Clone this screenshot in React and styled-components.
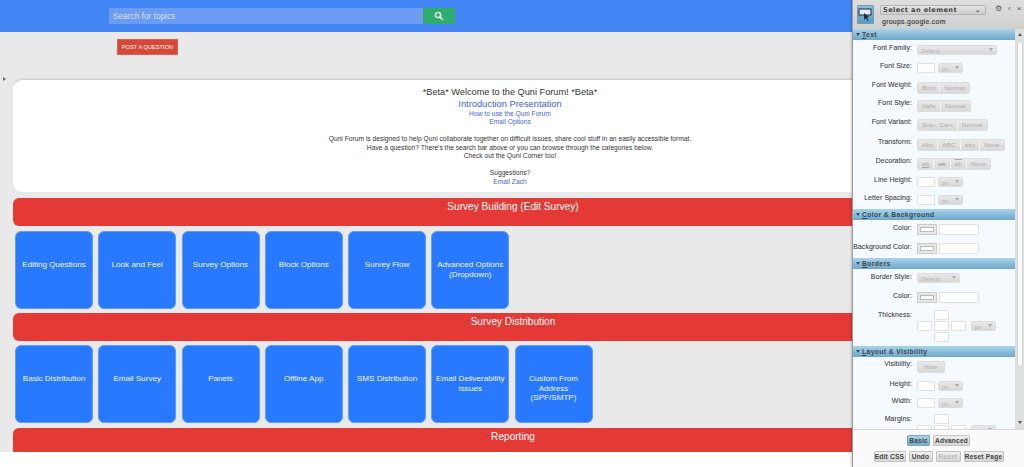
import React from 'react';
import styled, { createGlobalStyle } from 'styled-components';

const Global = createGlobalStyle`
  html, body { margin: 0; padding: 0; background: #fff; overflow: hidden; }
  body { font-family: "Liberation Sans", Arial, sans-serif; }
`;
const Page = styled.div`position: relative; width: 1024px; height: 467px; overflow: hidden; background: #fff;`;
const Main = styled.div`height: 452px; overflow: hidden; background: #e9e9ea;`;
const TopBar = styled.header`
  height: 32px; background: #4285f4; display: flex; align-items: center; padding-left: 109px; box-sizing: border-box;
`;
const SearchBox = styled.div`
  width: 314px; height: 16px; background: #6d9cf6; color: #d5e2fb; font-size: 8.3px; display: flex; align-items: center;
  justify-content: space-between; padding: 0 4px; box-sizing: border-box;
`;
const SearchCaret = styled.span`width: 0; height: 0; border: 2px solid transparent; border-top: 3px solid #8e9bb4; margin-top: 3px;`;
const SearchBtn = styled.div`width: 32px; height: 16px; background: #2fad6d; display: flex; align-items: center; justify-content: center;`;
const ActionRow = styled.div`height: 48px; padding: 7px 0 0 117px; box-sizing: border-box; position: relative;`;
const PostBtn = styled.div`
  width: 61px; height: 16px; background: #d64937; border: 1px solid #e0604f; box-sizing: border-box; color: #fff;
  font-size: 5.7px; display: flex; align-items: center; justify-content: center; white-space: nowrap;
`;
const Toggle = styled.span`
  position: absolute; left: 3px; top: 45px; width: 0; height: 0; border: 2px solid transparent; border-left: 3px solid #666;
`;
const Content = styled.div`width: 994px; margin-left: 13px;`;
const Welcome = styled.section`
  height: 112px; background: #fff; border-radius: 9px; box-shadow: 0 -2px 2px -1px rgba(0,0,0,.15); text-align: center;
  padding-top: 6.5px; box-sizing: border-box; color: #333; font-size: 6.7px; line-height: 8.5px; margin-bottom: 6px;
`;
const Title = styled.div`font-size: 9.2px; line-height: 11px;`;
const BigLink = styled.div`font-size: 9.3px; line-height: 12px; color: #3d5fd0;`;
const Small = styled.div`color: ${p => (p.$link ? '#4a5fd0' : '#333')}; min-height: 8.5px; padding-top: ${p => p.$top || 0}px;`;
const CatBar = styled.div`
  height: 28px; background: #e53935; border-radius: 6px; color: #fff; font-size: 10.1px; line-height: 13px;
  text-align: center; box-sizing: border-box; padding-top: 2px;
`;
const CatCaret = styled.span`
  display: inline-block; width: 0; height: 0; border: 2px solid transparent; border-top: 2px solid #8b4a48; margin-right: 2px; vertical-align: 1px;
`;
const Tiles = styled.div`display: flex; gap: 5.25px; padding: ${p => p.$top}px 0 ${p => p.$bottom}px 2px;`;
const Tile = styled.div`
  width: 78px; height: 78px; background: #2979ff; border: 1px solid #5f9bff; border-radius: 6px; box-sizing: border-box; color: #f1f6ff;
  font-size: 8.1px; line-height: 9.7px; text-align: center; padding: 28px 2px 0;
`;

const Panel = styled.aside`
  position: absolute; right: 0; top: 0; width: 172px; height: 467px; background: #f4faff; border-left: 1px solid #9a9a9a; box-sizing: border-box;
  display: flex; flex-direction: column; font-size: 7px; color: #444;
  box-shadow: -1px 0 2px rgba(0,0,0,.2);
`;
const PanelHead = styled.div`
  height: 29px; flex: none; background: linear-gradient(#dedede,#cfcfcf); display: flex; padding: 5px 4px 0 4px; box-sizing: border-box; gap: 6px;
`;
const Logo = styled.div`
  width: 19px; height: 19px; background: linear-gradient(#8cc0dc,#5c9bc0); border: 1px solid #6f9db8; box-sizing: border-box; border-radius: 1px;
  display: flex; align-items: center; justify-content: center;
`;
const HeadCol = styled.div`display: flex; flex-direction: column; gap: 3px;`;
const ElSelect = styled.div`
  width: 106px; height: 10px; background: linear-gradient(#e6e6e6,#cbcbcb); border: 1px solid #b4b4b4; border-radius: 2px; box-sizing: border-box;
  font-family: "DejaVu Sans", sans-serif; font-weight: 700; font-size: 6.6px; line-height: 8px; padding: 0 4px 0 2px; letter-spacing: .4px; color: #444; display: flex; justify-content: space-between;
`;
const Host = styled.div`font-size: 6.9px; padding-left: 2px; letter-spacing: .3px; color: #3a3a3a; -webkit-text-stroke: .15px #3a3a3a;`;
const HeadIcons = styled.div`display: flex; gap: 6px; align-items: flex-start; color: #555; margin-left: 3px; font-size: 8px; line-height: 8px; height: 10px; padding-top: 0;`;
const Scroll = styled.div`flex: 1; display: flex; overflow: hidden; min-height: 0;`;
const Sections = styled.div`width: 162px; flex: none; overflow: hidden; height: 400px;`;
const Track = styled.div`flex: 1; background: #dfdfdf; position: relative; border-left: 1px solid #ddd;`;
const Thumb = styled.div`position: absolute; left: 1px; right: 1px; top: 12px; height: 326px; background: #fbfbfb; border: 1px solid #d5d5d5; border-radius: 3px; box-sizing: border-box;`;
const ArrowUp = styled.span`position: absolute; left: 2px; top: 2px; width: 0; height: 0; border: 2px solid transparent; border-bottom: 3px solid #555;`;
const ArrowDown = styled.span`position: absolute; left: 2px; top: 392px; width: 0; height: 0; border: 2px solid transparent; border-top: 3px solid #555;`;
const SectionHead = styled.div`
  height: ${p => p.$h || 11}px; background: linear-gradient(#a9d4ec,#6ea6c8); font-size: 6.8px; font-weight: 700; line-height: 11px; color: #3a4a56; padding-left: 3px; letter-spacing: .35px;
`;
const Hot = styled.span`text-decoration: underline;`;
const Tri = styled.span`display: inline-block; width: 0; height: 0; border: 2px solid transparent; border-top: 3px solid #33505f; margin-right: 2px; vertical-align: -1px;`;
const Row = styled.div`display: flex; height: ${p => p.$h}px; align-items: flex-start;`;
const Label = styled.div`
  width: 59px; flex: none; text-align: right; font-size: 6.9px; line-height: ${p => p.$lh || 7}px; color: #444; padding-top: ${p => p.$pt ?? 4}px; letter-spacing: .1px; -webkit-text-stroke: .1px #444;
`;
const Controls = styled.div`margin-left: 5px; display: flex; gap: ${p => p.$gap ?? 3}px; padding-top: ${p => p.$pt ?? 5}px;`;
const Input = styled.div`
  width: ${p => p.$w || 18}px; height: ${p => p.$tall ? 11 : 10}px; background: #fff; border: 1px solid #e0e0e0; box-sizing: border-box; border-radius: 1px;
`;
const Drop = styled.div`
  width: ${p => p.$w || 25}px; height: 10px; background: linear-gradient(#e8e8e8,#d8d8d8); border: 1px solid #ddd; box-sizing: border-box; border-radius: 2px;
  color: #b5b5b5; font-size: 6px; line-height: 11px; padding-left: 3px; display: flex; justify-content: space-between; overflow: hidden;
`;
const DropTri = styled.span`width: 0; height: 0; border: 2.5px solid transparent; border-top: 3px solid #a8a8a8; margin: 2px 3px 0 0;`;
const Seg = styled.div`display: flex; height: 10px; background: linear-gradient(#e8e8e8,#d9d9d9); border: 1px solid #ddd; border-radius: 2px;`;
const SegItem = styled.div`
  padding: 0 ${p => p.$pad}px; font-size: 6.2px; line-height: 10px; color: #aaa; letter-spacing: .2px; text-decoration: ${p => p.$deco || 'none'};
  font-style: ${p => (p.$italic ? 'italic' : 'normal')}; font-variant: ${p => (p.$caps ? 'small-caps' : 'normal')};
  border-left: ${p => (p.$first ? 'none' : '1px solid #f4f4f4')};
`;
const Swatch = styled.div`
  width: 20px; height: 11px; background: #e6e6e6; border: 1px solid #ccc; box-sizing: border-box; padding: 2px; display: flex;
`;
const SwatchFill = styled.div`flex: 1; background: #fff; border: 1px solid #bbb;`;
const Quad = styled.div`
  display: grid; grid-template-columns: 15px 15px 15px 25px; grid-template-rows: 10px 10px 10px; gap: 1px 2px; margin-left: 5px; padding-top: 3px;
`;
const QuadCell = styled.div`
  grid-column: ${p => p.$c}; grid-row: ${p => p.$r}; background: #fff; border: 1px solid #e0e0e0; box-sizing: border-box; border-radius: 1px;
`;
const QuadDrop = styled(Drop)`grid-column: 4; grid-row: 2; margin-left: 3px;`;
const Footer = styled.div`
  flex: none; height: 38px; background: #fafafa; border-top: 1px solid #d8d8d8; box-sizing: border-box; padding-top: 5px; display: flex; flex-direction: column; align-items: center; gap: 5px;
`;
const FootRow = styled.div`display: flex; gap: 3px; justify-content: center;`;
const FootBtn = styled.div`
  width: ${p => p.$w}px; height: 11px; border: 1px solid ${p => (p.$active ? '#7aa8c4' : '#c4c4c4')}; border-radius: 1px; box-sizing: border-box; text-align: center;
  background: ${p => (p.$active ? 'linear-gradient(#a9d4ec,#78aecd)' : 'linear-gradient(#f0f0f0,#d6d6d6)')};
  color: ${p => (p.$dim ? '#bbb' : '#444')}; font-size: 6.6px; font-weight: 700; line-height: 9px; letter-spacing: .2px; white-space: nowrap;
`;

const Unit = () => <Drop>px<DropTri /></Drop>;
const FieldRow = ({ h, label }) => (
  <Row $h={h}><Label>{label}</Label><Controls><Input /><Unit /></Controls></Row>
);
const SegRow = ({ h, label, items, pad = 4, decos, italicFirst, capsFirst, ctrl }) => (
  <Row $h={h}>
    <Label $pt={ctrl === 4 ? 3 : 4}>{label}</Label>
    <Controls $pt={ctrl}>
      <Seg>{items.map((t, i) => (
        <SegItem key={t + i} $first={i === 0} $pad={pad} $deco={decos && decos[i]} $italic={italicFirst && i === 0} $caps={capsFirst && i === 0}>{t}</SegItem>
      ))}</Seg>
    </Controls>
  </Row>
);
const ColorRow = ({ label, twoLine }) => (
  <Row $h={19}>
    <Label $lh={twoLine ? 5.5 : 7} $pt={twoLine ? 4.5 : 4}>{label}</Label>
    <Controls $pt={4} $gap={2}><Swatch><SwatchFill /></Swatch><Input $w={40} $tall /></Controls>
  </Row>
);
const Section = ({ hot, rest, h }) => <SectionHead $h={h}><Tri /><Hot>{hot}</Hot>{rest}</SectionHead>;

const first = ['Editing Questions', 'Look and Feel', 'Survey Options', 'Block Options', 'Survey Flow', 'Advanced Options (Dropdown)'];
const second = ['Basic Distribution', 'Email Survey', 'Panels', 'Offline App', 'SMS Distribution', 'Email Deliverability Issues', 'Custom From Address (SPF/SMTP)'];

export default function App() {
  return (
    <Page>
      <Global />
      <Main>
        <TopBar>
          <SearchBox>Search for topics<SearchCaret /></SearchBox>
          <SearchBtn>
            <svg width="10" height="10" viewBox="0 0 10 10" fill="none" stroke="#fff" strokeWidth="1.4"><circle cx="4" cy="4" r="2.6" /><path d="M6 6l3 3" /></svg>
          </SearchBtn>
        </TopBar>
        <ActionRow><PostBtn>POST A QUESTION</PostBtn><Toggle /></ActionRow>
        <Content>
          <Welcome>
            <Title>*Beta* Welcome to the Quni Forum! *Beta*</Title>
            <BigLink>Introduction Presentation</BigLink>
            <Small $link>How to use the Quni Forum</Small>
            <Small $link>Email Options</Small>
            <Small $top={8.5}>Quni Forum is designed to help Quni collaborate together on difficult issues, share cool stuff in an easily accessible format.</Small>
            <Small>Have a question? There's the search bar above or you can browse through the categories below.</Small>
            <Small>Check out the Quni Corner too!</Small>
            <Small $top={8.5}>Suggestions?</Small>
            <Small $link>Email Zach</Small>
          </Welcome>
          <CatBar><CatCaret />Survey Building (Edit Survey)</CatBar>
          <Tiles $top={5} $bottom={4}>{first.map(t => <Tile key={t}>{t}</Tile>)}</Tiles>
          <CatBar><CatCaret />Survey Distribution</CatBar>
          <Tiles $top={4} $bottom={5}>{second.map(t => <Tile key={t}>{t}</Tile>)}</Tiles>
          <CatBar><CatCaret />Reporting</CatBar>
        </Content>
      </Main>
      <Panel>
        <PanelHead>
          <Logo>
            <svg width="15" height="14" viewBox="0 0 15 14"><rect x="1" y="1" width="12" height="6" fill="#dfeef6" stroke="#1c2c38" strokeWidth="1" /><path d="M6 5l0 7 2-2 1.500 3 1-.5-1.500-3h2.500z" fill="#1c2c38" /></svg>
          </Logo>
          <HeadCol>
            <ElSelect>Select an element<span>⌄</span></ElSelect>
            <Host>groups.google.com</Host>
          </HeadCol>
          <HeadIcons><span>⚙</span><span>‹</span><span>×</span></HeadIcons>
        </PanelHead>
        <Scroll>
          <Sections>
            <Section hot="T" rest="ext" />
            <Row $h={18}><Label>Font Family:</Label><Controls><Drop $w={80}>Default<DropTri /></Drop></Controls></Row>
            <FieldRow h={19} label="Font Size:" />
            <SegRow h={18} label="Font Weight:" items={['Bold', 'Normal']} />
            <SegRow h={19} label="Font Style:" items={['Italic', 'Normal']} italicFirst />
            <SegRow h={20} label="Font Variant:" items={['Small Caps', 'Normal']} capsFirst />
            <SegRow h={19} label="Transform:" items={['Abc', 'ABC', 'abc', 'None']} />
            <SegRow h={19} label="Decoration:" items={['ab', 'ab', 'ab', 'None']} decos={['underline', 'line-through', 'overline', 'none']} />
            <FieldRow h={18} label="Line Height:" />
            <FieldRow h={19} label="Letter Spacing:" />
            <Section hot="C" rest="olor & Background" />
            <ColorRow label="Color:" />
            <ColorRow label="Background Color:" twoLine />
            <Section hot="B" rest="orders" />
            <Row $h={19}><Label>Border Style:</Label><Controls $pt={4}><Drop $w={43}>Default<DropTri /></Drop></Controls></Row>
            <ColorRow label="Color:" />
            <Row $h={39}>
              <Label>Thickness:</Label>
              <Quad>
                <QuadCell $c={2} $r={1} /><QuadCell $c={1} $r={2} /><QuadCell $c={2} $r={2} /><QuadCell $c={3} $r={2} /><QuadDrop>px<DropTri /></QuadDrop><QuadCell $c={2} $r={3} />
              </Quad>
            </Row>
            <Section hot="L" rest="ayout & Visibility" />
            <SegRow h={19} label="Visibility:" items={['Hide']} pad={6} ctrl={4} />
            <FieldRow h={17} label="Height:" />
            <FieldRow h={18} label="Width:" />
            <Row $h={39}>
              <Label>Margins:</Label>
              <Quad>
                <QuadCell $c={2} $r={1} /><QuadCell $c={1} $r={2} /><QuadCell $c={2} $r={2} /><QuadCell $c={3} $r={2} /><QuadDrop>px<DropTri /></QuadDrop>
              </Quad>
            </Row>
          </Sections>
          <Track><ArrowUp /><Thumb /><ArrowDown /></Track>
        </Scroll>
        <Footer>
          <FootRow><FootBtn $w={23} $active>Basic</FootBtn><FootBtn $w={37}>Advanced</FootBtn></FootRow>
          <FootRow><FootBtn $w={32}>Edit CSS</FootBtn><FootBtn $w={24}>Undo</FootBtn><FootBtn $w={25} $dim>Reset</FootBtn><FootBtn $w={40}>Reset Page</FootBtn></FootRow>
        </Footer>
      </Panel>
    </Page>
  );
}
